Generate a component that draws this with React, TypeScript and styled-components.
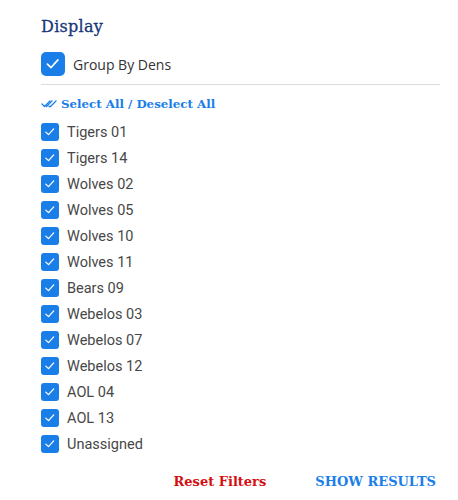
import React from 'react';
import styled, { createGlobalStyle } from 'styled-components';

const GlobalStyle = createGlobalStyle`
  body {
    margin: 0;
    background: #ffffff;
    font-family: Roboto, "Liberation Sans", sans-serif;
  }
`;

const StyledPanel = styled.div`
  width: 399px;
  padding: 15px 0 0 41px;
  display: flex;
  flex-direction: column;
`;

const StyledTitle = styled.h2`
  margin: 0;
  font-family: "DejaVu Serif", serif;
  font-size: 16px;
  font-weight: 400;
  line-height: 24px;
  color: #15367a;
  letter-spacing: 0.3px;
  -webkit-text-stroke: 0.3px #15367a;
`;

const StyledGroupRow = styled.label`
  display: flex;
  align-items: center;
  gap: 8px;
  margin-top: 13px;
  padding-bottom: 8px;
  border-bottom: 1.5px solid #dcdcdc;
  font-family: "Open Sans", sans-serif;
  font-size: 14px;
  color: #333333;
`;

const StyledBox = styled.span<{ $size: number }>`
  width: ${(p) => p.$size}px;
  height: ${(p) => p.$size}px;
  border-radius: ${(p) => (p.$size > 20 ? 5 : 3)}px;
  background: #1a7ee9;
  display: inline-flex;
  align-items: center;
  justify-content: center;
  flex-shrink: 0;
`;

const StyledSelectAll = styled.button`
  display: flex;
  align-items: center;
  gap: 4px;
  margin-top: 12px;
  padding: 0;
  border: none;
  background: transparent;
  font-family: "DejaVu Serif", serif;
  font-weight: 700;
  font-size: 11.8px;
  color: #1a7ee9;
  cursor: pointer;
`;

const StyledList = styled.ul`
  list-style: none;
  margin: 8px 0 0;
  padding: 0;
  display: flex;
  flex-direction: column;
`;

const StyledItem = styled.li`
  display: flex;
  align-items: center;
  gap: 8px;
  height: 26px;
  font-size: 14.5px;
  color: #474747;
`;

const StyledFooter = styled.div`
  display: flex;
  justify-content: flex-end;
  gap: 49px;
  margin-top: 17px;
  padding-right: 4px;
`;

const StyledAction = styled.button<{ $tone: 'red' | 'blue' }>`
  border: none;
  background: transparent;
  padding: 0;
  font-family: "DejaVu Serif", serif;
  font-weight: 700;
  font-size: 13px;
  color: ${(p) => (p.$tone === 'red' ? '#d40f12' : '#1a7ee9')};
  cursor: pointer;
`;

const dens = [
  'Tigers 01',
  'Tigers 14',
  'Wolves 02',
  'Wolves 05',
  'Wolves 10',
  'Wolves 11',
  'Bears 09',
  'Webelos 03',
  'Webelos 07',
  'Webelos 12',
  'AOL 04',
  'AOL 13',
  'Unassigned',
];

const Check = ({ size }: { size: number }) => (
  <StyledBox $size={size}>
    <svg width={size * 0.64} height={size * 0.64} viewBox="0 0 16 16" fill="none">
      <path d="M2.5 8.5 L6.3 12 L13.5 4" stroke="#fff" strokeWidth="1.8" strokeLinecap="round" strokeLinejoin="round" />
    </svg>
  </StyledBox>
);

const DoubleCheck = () => (
  <svg width="16" height="10" viewBox="0 0 16 10" fill="none" stroke="#1a7ee9" strokeWidth="1.3" strokeLinecap="round" strokeLinejoin="round">
    <path d="M1 5 L3.5 7.5 L9 2" />
    <path d="M5 7 L5.5 7.5 L11 2" />
    <path d="M8 7.5 L9.5 7.5 L15 2" />
  </svg>
);

const App = () => {
  return (
    <>
      <GlobalStyle />
      <StyledPanel>
        <StyledTitle>Display</StyledTitle>
        <StyledGroupRow>
          <Check size={24} />
          Group By Dens
        </StyledGroupRow>
        <StyledSelectAll>
          <DoubleCheck />
          Select All / Deselect All
        </StyledSelectAll>
        <StyledList>
          {dens.map((den) => (
            <StyledItem key={den}>
              <Check size={18} />
              {den}
            </StyledItem>
          ))}
        </StyledList>
        <StyledFooter>
          <StyledAction $tone="red">Reset Filters</StyledAction>
          <StyledAction $tone="blue">SHOW RESULTS</StyledAction>
        </StyledFooter>
      </StyledPanel>
    </>
  );
};

export default App;
